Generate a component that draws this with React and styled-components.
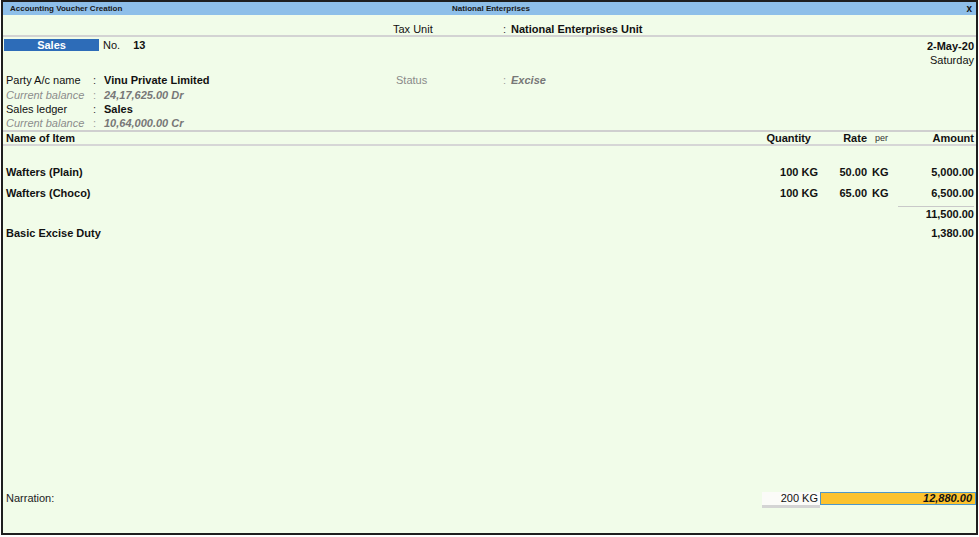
import React from "react";
import styled, { createGlobalStyle } from "styled-components";

const GlobalStyle = createGlobalStyle`
  html, body {
    margin: 0;
    padding: 0;
    background: #ffffff;
  }
  body {
    font-family: "Liberation Sans", Arial, sans-serif;
    font-size: 11px;
    color: #111;
  }
`;

const items = [
  { name: "Wafters (Plain)", qty: "100 KG", rate: "50.00", per: "KG", amount: "5,000.00" },
  { name: "Wafters (Choco)", qty: "100 KG", rate: "65.00", per: "KG", amount: "6,500.00" },
];

const App = () => {
  return (
    <>
      <GlobalStyle />
      <Frame>
        <TitleBar>
          <TitleLeft>Accounting Voucher Creation</TitleLeft>
          <TitleCenter>National Enterprises</TitleCenter>
          <CloseBtn>x</CloseBtn>
        </TitleBar>

        <TaxRow>
          <FieldLabel $wide>Tax Unit</FieldLabel>
          <Colon>:</Colon>
          <Value>National Enterprises Unit</Value>
        </TaxRow>

        <VoucherHead>
          <SalesRow>
            <TypeBox>Sales</TypeBox>
            <NoLabel>No.</NoLabel>
            <Value>13</Value>
          </SalesRow>
          <DateCol>
            <DateText>2-May-20</DateText>
            <DayText>Saturday</DayText>
          </DateCol>
        </VoucherHead>

        <PartyGrid>
          <FieldLabel>Party A/c name</FieldLabel>
          <Colon>:</Colon>
          <Value>Vinu Private Limited</Value>
          <FieldLabel $muted>Status</FieldLabel>
          <Colon $muted>:</Colon>
          <Value $muted>Excise</Value>

          <FieldLabel $sub>Current balance</FieldLabel>
          <Colon $muted>:</Colon>
          <Value $muted>24,17,625.00 Dr</Value>
          <span />
          <span />
          <span />

          <FieldLabel>Sales ledger</FieldLabel>
          <Colon>:</Colon>
          <Value>Sales</Value>
          <span />
          <span />
          <span />

          <FieldLabel $sub>Current balance</FieldLabel>
          <Colon $muted>:</Colon>
          <Value $muted>10,64,000.00 Cr</Value>
          <span />
          <span />
          <span />
        </PartyGrid>

        <HeadRow>
          <Cell>Name of Item</Cell>
          <Cell $right $pr={7}>Quantity</Cell>
          <Cell $right>Rate</Cell>
          <PerHead>per</PerHead>
          <Cell $right>Amount</Cell>
        </HeadRow>

        <ItemList>
          {items.map((it) => (
            <ItemRow key={it.name}>
              <Cell>{it.name}</Cell>
              <Cell $right>{it.qty}</Cell>
              <Cell $right>{it.rate}</Cell>
              <Cell $pl={5}>{it.per}</Cell>
              <Cell $right>{it.amount}</Cell>
            </ItemRow>
          ))}
          <SubtotalRow>
            <Cell />
            <Cell />
            <Cell />
            <Cell />
            <TotalCell>11,500.00</TotalCell>
          </SubtotalRow>
          <DutyRow>
            <Cell>Basic Excise Duty</Cell>
            <Cell />
            <Cell />
            <Cell />
            <Cell $right>1,380.00</Cell>
          </DutyRow>
        </ItemList>

        <NarrationRow>
          <NarrationLabel>Narration:</NarrationLabel>
          <QtyTotal>200 KG</QtyTotal>
          <GrandTotal>12,880.00</GrandTotal>
        </NarrationRow>
      </Frame>
    </>
  );
};

const Frame = styled.div`
  box-sizing: border-box;
  width: 977px;
  height: 535px;
  margin: 0 1px 2px 1px;
  border: 2px solid #1e1e1e;
  background: #f1fce9;
  display: flex;
  flex-direction: column;
  overflow: hidden;
`;

const TitleBar = styled.div`
  height: 13px;
  background: #8ebfe9;
  display: grid;
  grid-template-columns: 1fr auto 1fr;
  align-items: center;
  padding: 0 4px 0 7px;
  font-size: 8px;
  font-weight: bold;
  color: #1a1a1a;
  line-height: 13px;
`;

const TitleLeft = styled.div``;

const TitleCenter = styled.div`
  text-align: center;
`;

const CloseBtn = styled.div`
  text-align: right;
  font-size: 10px;
  font-weight: bold;
  color: #111;
`;

const TaxRow = styled.div`
  box-sizing: border-box;
  height: 22px;
  border-bottom: 2px solid #d3d3d3;
  display: flex;
  align-items: flex-end;
  padding-left: 390px;
  line-height: 12px;
`;

const FieldLabel = styled.div`
  width: ${(p) => (p.$wide ? "110px" : "auto")};
  color: ${(p) => (p.$sub ? "#8c8c8c" : p.$muted ? "#8a8a8a" : "#111")};
  font-style: ${(p) => (p.$sub ? "italic" : "normal")};
  white-space: nowrap;
`;

const Colon = styled.div`
  color: ${(p) => (p.$muted ? "#9a9a9a" : "#333")};
  width: 8px;
`;

const Value = styled.div`
  font-weight: bold;
  color: ${(p) => (p.$muted ? "#777" : "#111")};
  font-style: ${(p) => (p.$muted ? "italic" : "normal")};
  white-space: nowrap;
`;

const VoucherHead = styled.div`
  display: flex;
  justify-content: space-between;
  align-items: flex-start;
  margin-top: 2px;
  padding-right: 2px;
`;

const SalesRow = styled.div`
  display: flex;
  align-items: center;
  height: 12px;
  line-height: 12px;
`;

const TypeBox = styled.div`
  width: 95px;
  height: 12px;
  margin-left: 1px;
  background: #2d6cb8;
  color: #fff;
  font-weight: bold;
  text-align: center;
`;

const NoLabel = styled.div`
  margin: 0 13px 0 4px;
`;

const DateCol = styled.div`
  display: flex;
  flex-direction: column;
  align-items: flex-end;
  line-height: 14px;
`;

const DateText = styled.div`
  font-weight: bold;
`;

const DayText = styled.div``;

const PartyGrid = styled.div`
  margin-top: 5px;
  padding-left: 3px;
  display: grid;
  grid-template-columns: 87px 11px 292px 107px 8px 1fr;
  grid-template-rows: 14px 15px 14px 14px;
  align-items: center;
  border-bottom: 2px solid #cfcfcf;
  padding-top: 1px;
`;

const columns = "1fr 90px 49px 29px 78px";

const HeadRow = styled.div`
  display: grid;
  grid-template-columns: ${columns};
  align-items: center;
  height: 14px;
  line-height: 12px;
  padding: 0 2px 0 3px;
  font-weight: bold;
  border-bottom: 2px solid #d6d6d6;
  box-sizing: border-box;
`;

const Cell = styled.div`
  text-align: ${(p) => (p.$right ? "right" : "left")};
  padding-right: ${(p) => p.$pr || 0}px;
  padding-left: ${(p) => p.$pl || 0}px;
  white-space: nowrap;
`;

const PerHead = styled.div`
  font-weight: normal;
  font-size: 9px;
  padding-left: 8px;
  color: #333;
`;

const ItemList = styled.div`
  padding: 15px 2px 0 3px;
  font-weight: bold;
`;

const ItemRow = styled.div`
  display: grid;
  grid-template-columns: ${columns};
  align-items: center;
  height: 21px;
`;

const SubtotalRow = styled.div`
  display: grid;
  grid-template-columns: ${columns};
  align-items: center;
  margin-top: 3px;
  height: 14px;
`;

const TotalCell = styled.div`
  text-align: right;
  border-top: 1px solid #c9c9c9;
  height: 14px;
  line-height: 14px;
  margin-left: 2px;
`;

const DutyRow = styled.div`
  display: grid;
  grid-template-columns: ${columns};
  align-items: center;
  margin-top: 6px;
  height: 14px;
`;

const NarrationRow = styled.div`
  margin-top: auto;
  margin-bottom: 25px;
  display: flex;
  align-items: flex-start;
  padding-left: 3px;
`;

const NarrationLabel = styled.div`
  flex: 1;
  line-height: 13px;
  color: #222;
`;

const QtyTotal = styled.div`
  width: 56px;
  height: 13px;
  line-height: 13px;
  background: #fbfbf8;
  border-bottom: 3px solid #d4d4d4;
  text-align: right;
  padding-right: 2px;
  box-sizing: content-box;
`;

const GrandTotal = styled.div`
  width: 151px;
  height: 11px;
  line-height: 11px;
  background: #fcc22e;
  border: 1px solid #4f97c8;
  text-align: right;
  padding-right: 3px;
  font-weight: bold;
  font-style: italic;
`;

export default App;
